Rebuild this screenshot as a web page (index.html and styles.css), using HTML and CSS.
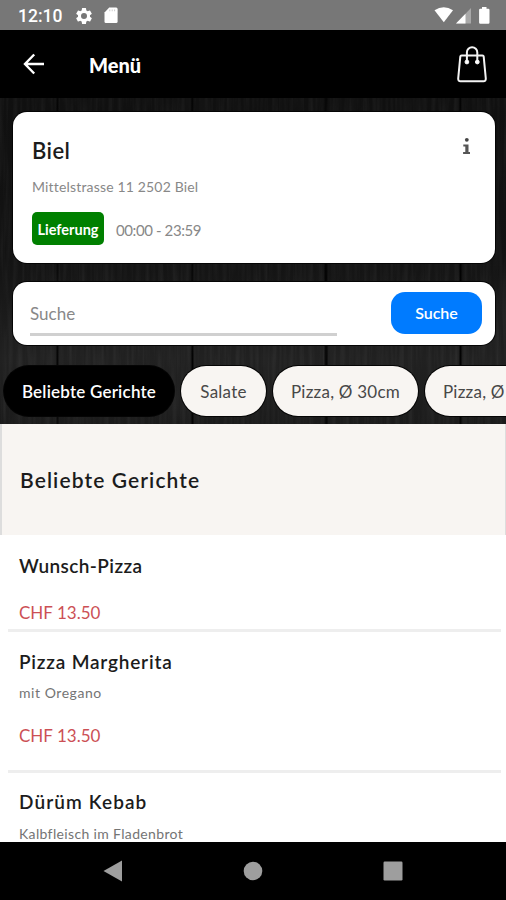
FILE: index.html
```html
<!DOCTYPE html>
<html lang="de">
<head>
<meta charset="utf-8">
<title>Menü</title>
<link rel="stylesheet" href="styles.css">
</head>
<body>
<div class="phone">
  <div class="status">
    <span class="clock">12:10</span>
    <svg class="gear" width="20" height="20" viewBox="0 0 24 24"><path fill="#fff" d="M19.14 12.94c.04-.3.06-.61.06-.94s-.02-.64-.07-.94l2.03-1.58a.49.49 0 0 0 .12-.61l-1.92-3.32a.49.49 0 0 0-.59-.22l-2.39.96a7 7 0 0 0-1.62-.94l-.36-2.54a.48.48 0 0 0-.48-.41h-3.84a.47.47 0 0 0-.47.41l-.36 2.54c-.59.24-1.13.57-1.62.94l-2.39-.96a.48.48 0 0 0-.59.22L2.74 8.87a.47.47 0 0 0 .12.61l2.03 1.58c-.05.3-.09.63-.09.94s.02.64.07.94l-2.03 1.58a.49.49 0 0 0-.12.61l1.92 3.32c.12.22.37.29.59.22l2.39-.96c.5.38 1.03.7 1.62.94l.36 2.54c.05.24.24.41.48.41h3.84c.24 0 .44-.17.47-.41l.36-2.54a6.6 6.6 0 0 0 1.62-.94l2.39.96c.22.08.47 0 .59-.22l1.92-3.32a.47.47 0 0 0-.12-.61zM12 15.6A3.6 3.6 0 1 1 12 8.4a3.6 3.6 0 0 1 0 7.2z"/></svg>
    <svg class="sd" width="14" height="17" viewBox="0 0 14 17"><path fill="#fff" d="M5.2.5h7Q13.6.5 13.6 2v12.500q0 1.500-1.500 1.500H1.900Q.5 16 .5 14.500V5.400z"/><path fill="#ccc" d="M5.300 2.500h1v1.800h-1zM7.700 2.500h1v1.800h-1zM10.100 2.500h1v1.800h-1z"/></svg>
    <span class="fill"></span>
    <svg width="58" height="18" viewBox="0 0 58 18"><path fill="#fff" d="M.5 3.200Q9.700-2.800 19 3.200L9.800 15.300z"/><path fill="#a8a8a8" d="M37 1v15.500H22z"/><path fill="#fff" d="M31.500 6.700v9.800H22z"/><path fill="#fff" d="M48 1.700V0h4.500v1.700h1.800q1.200 0 1.200 1.200v12.700q0 1.200-1.200 1.200h-8q-1.200 0-1.200-1.200V2.900q0-1.200 1.200-1.200z"/></svg>
  </div>
  <header class="appbar">
    <svg width="22" height="22" viewBox="0 0 22 22" fill="none" stroke="#fff" stroke-width="2.400"><path d="M21 11H2.200M11.200 1.500L2 11l9.200 9.500"/></svg>
    <h1>Menü</h1>
    <span class="fill"></span>
    <svg width="30" height="38" viewBox="0 0 30 38" fill="none" stroke="#f4f4f4" stroke-width="2"><path stroke-linejoin="round" d="M4.600 10.500h20.800q1.200 0 1.300 1.200L28.800 33.500q.1 2.700-2.300 2.700h-23Q1.100 36.200 1.200 33.500l2.100-21.800q.1-1.200 1.300-1.200z"/><path d="M9.900 16V7.500a5.200 5.200 0 0 1 10.400 0V16"/><circle cx="9.900" cy="17" r="1.900" fill="#fff" stroke-width="1"/><circle cx="20.300" cy="17" r="1.900" fill="#fff" stroke-width="1"/></svg>
  </header>
  <section class="hero">
    <svg class="grain" width="506" height="326">
      <filter id="wood" x="0" y="0" width="100%" height="100%"><feTurbulence type="fractalNoise" baseFrequency=".22 .012" numOctaves="3" seed="4"/><feColorMatrix values="0 0 0 0 1  0 0 0 0 1  0 0 0 0 1  .5 0 0 0 -.18"/></filter>
      <rect width="506" height="326" filter="url(#wood)"/>
    </svg>
    <div class="card shop">
      <div class="shop-top"><h2>Biel</h2>
        <svg width="9" height="18" viewBox="0 0 9 18"><circle cx="4.800" cy="2.800" r="1.900" fill="#444"/><path fill="#555" d="M1.300 7.500h5.200v7.600H8V17H1.100v-1.900h2.200V9.400h-2z"/></svg>
      </div>
      <p class="address">Mittelstrasse 11 2502 Biel</p>
      <div class="delivery"><span class="badge">Lieferung</span><span class="hours">00:00 - 23:59</span></div>
    </div>
    <div class="card search">
      <div class="field">Suche</div>
      <button class="button">Suche</button>
    </div>
    <nav class="chips">
      <span class="chip active">Beliebte Gerichte</span>
      <span class="chip salad">Salate</span>
      <span class="chip pizza">Pizza, Ø 30cm</span>
      <span class="chip pizza">Pizza, Ø 30cm</span>
    </nav>
  </section>
  <h2 class="category"><span>Beliebte Gerichte</span></h2>
  <main class="dishes">
    <article class="dish first"><h3 class="n1">Wunsch-Pizza</h3><div class="price">CHF 13.50</div></article>
    <article class="dish second"><h3 class="n2">Pizza Margherita</h3><p class="d1">mit Oregano</p><div class="price">CHF 13.50</div></article>
    <article class="dish third"><h3 class="n3">Dürüm Kebab</h3><p class="d2">Kalbfleisch im Fladenbrot</p></article>
  </main>
  <footer class="navbar">
    <svg width="20" height="22" viewBox="0 0 20 22"><path fill="#9e9e9e" d="M19 .5v21L.5 11z"/></svg>
    <svg width="20" height="20" viewBox="0 0 20 20"><circle cx="10" cy="10" r="9.300" fill="#9e9e9e"/></svg>
    <svg width="20" height="20" viewBox="0 0 20 20"><rect x=".5" y=".5" width="19" height="19" rx="1.200" fill="#9e9e9e"/></svg>
  </footer>
</div>
</body>
</html>
```
FILE: styles.css
```css
* { box-sizing: border-box; margin: 0; padding: 0; }
body { background: #fff; font-family: Lato, "Open Sans", sans-serif; color: #1c1c1c; }
.phone { width: 506px; height: 900px; overflow: hidden; display: flex; flex-direction: column; }
.phone > * { flex-shrink: 0; }
.fill { flex: 1; }
svg { display: block; flex-shrink: 0; }

.status { height: 30px; background: #777; display: flex; align-items: center; padding: 1px 14px 0 18px; color: #fff; }
.clock { font: 500 17.500px/20px Roboto, sans-serif; width: 44px; white-space: nowrap; }
.gear { margin-left: 12px; }
.sd { margin-left: 10px; }

.appbar { height: 68px; background: #000; display: flex; align-items: center; padding: 0 19px 0 23px; color: #fff; }
.appbar h1 { margin-left: 44px; padding-top: 2px; font-size: 20px; font-weight: 900; line-height: 24px; }

.hero {
  position: relative; height: 326px; padding: 14px 0 0 13px; overflow: hidden;
  background:
    linear-gradient(90deg, transparent 56px, #050505 57px 58px, transparent 59px 191px, #030303 192px 193px, transparent 194px 324px, #030303 325px 327px, transparent 328px 459px, #030303 460px 461px, transparent 462px),
    linear-gradient(#101010, #131313 50%, #212121 80%, #1b1b1b);
}
.grain { position: absolute; left: 0; top: 0; opacity: .2; }
.card { position: relative; width: 482px; background: #fff; border-radius: 14px; box-shadow: 0 0 0 1px #050505; }
.shop { height: 151px; padding: 25px 24px 0 19px; }
.shop-top { display: flex; justify-content: space-between; }
.shop h2 { font-size: 22px; line-height: 28px; font-weight: 600; letter-spacing: .4px; }
.address { margin-top: 12px; font-size: 14px; line-height: 20px; color: #888; letter-spacing: .17px; }
.delivery { display: flex; align-items: center; margin-top: 15px; }
.badge { width: 72px; height: 33px; border-radius: 5px; background: #008000; color: #fff; font-size: 14.500px; line-height: 35px; font-weight: 700; text-align: center; }
.hours { margin-left: 12px; padding-top: 3px; font-size: 15px; line-height: 20px; color: #888; letter-spacing: -.4px; }

.search { height: 63px; margin-top: 19px; padding: 10px 13px 0 17px; display: flex; justify-content: space-between; align-items: flex-start; }
.field { width: 307px; height: 44px; border-bottom: 3px solid #d0d0d0; font-size: 17px; line-height: 43px; color: #888; }
.button { width: 91px; height: 42px; border: 0; border-radius: 14px; background: #007bff; color: #fff; font: 600 16px/42px Lato, sans-serif; }

.chips { position: relative; display: flex; gap: 7px; margin: 21px 0 0 -9px; white-space: nowrap; }
.chip { height: 50px; flex-shrink: 0; border-radius: 25px; background: #f8f5f2; color: #484848; font-size: 17px; line-height: 52px; text-align: center; letter-spacing: .23px; box-shadow: 0 0 0 1px #050505; }
.active { width: 170px; background: #000; color: #fff; font-weight: 600; letter-spacing: .2px; }
.salad { width: 85px; }
.pizza { width: 145px; }

.category { height: 111px; background: #f8f5f2; border-left: 2px solid #ddd; border-right: 1px solid #ddd; padding: 42px 0 0 18px; font-size: 21px; line-height: 28px; font-weight: 600; letter-spacing: 1.100px; }

.dishes { height: 307px; overflow: hidden; background: #fff; padding: 0 5px 0 8px; }
.dish { padding-left: 11px; border-bottom: 3px solid #eee; }
.dish h3 { font-size: 19px; line-height: 24px; font-weight: 600; }
.n1 { letter-spacing: .4px; }
.n2 { letter-spacing: .8px; }
.n3 { letter-spacing: 1.100px; }
.dish p { font-size: 14px; line-height: 18px; color: #747474; }
.dish .d1 { letter-spacing: .55px; }
.dish .d2 { letter-spacing: .35px; }
.price { font-size: 17px; line-height: 22px; color: #cc5055; }
.first { height: 97px; padding-top: 19px; }
.first .price { margin-top: 24px; }
.second { height: 141px; padding-top: 18px; }
.second p { margin-top: 10px; }
.second .price { margin-top: 23px; }
.third { height: 90px; padding-top: 17px; }
.third p { margin-top: 11px; }

.navbar { height: 58px; background: #000; display: flex; align-items: center; gap: 120px; padding-left: 103px; }
```
